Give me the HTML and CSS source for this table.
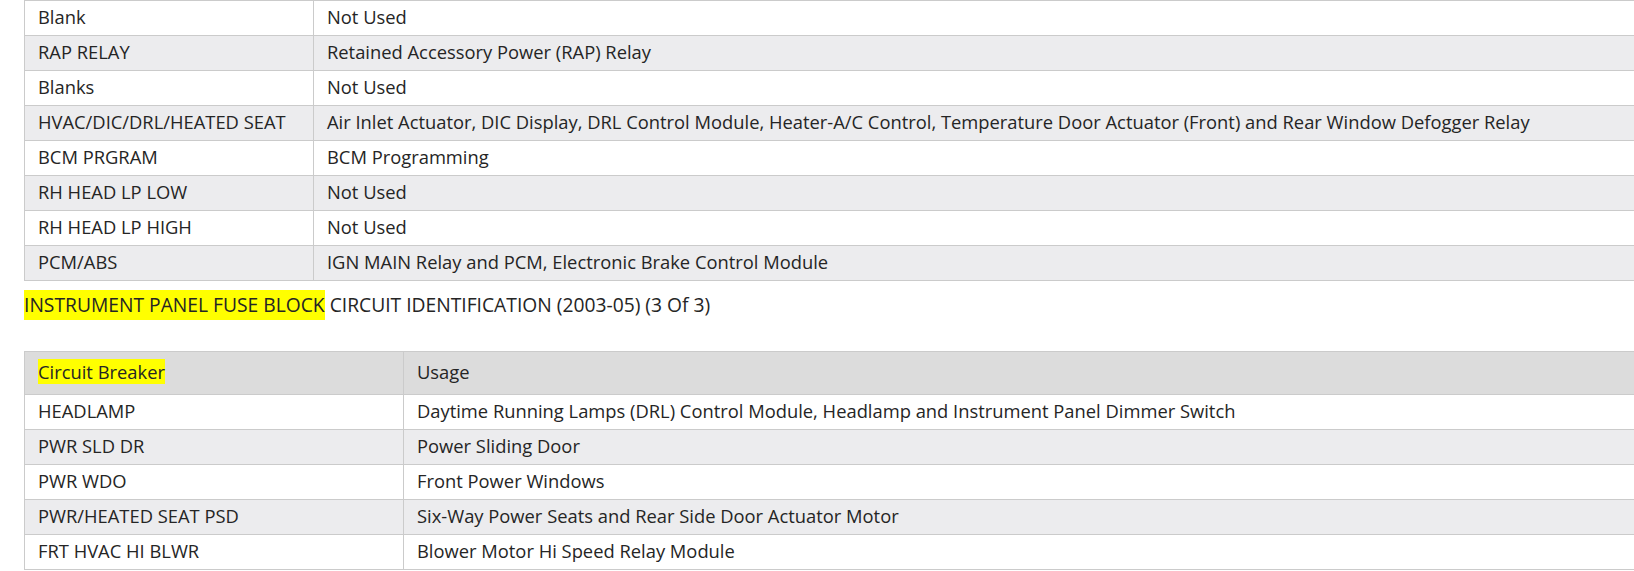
FILE: index.html
```html
<!DOCTYPE html>
<html>
<head>
<meta charset="utf-8">
<link rel="stylesheet" href="styles.css">
</head>
<body>
<div class="page">
  <table class="grid grid-a">
    <tbody>
      <tr><td class="c1">Blank</td><td>Not Used</td></tr>
      <tr><td class="c1">RAP RELAY</td><td>Retained Accessory Power (RAP) Relay</td></tr>
      <tr><td class="c1">Blanks</td><td>Not Used</td></tr>
      <tr><td class="c1">HVAC/DIC/DRL/HEATED SEAT</td><td>Air Inlet Actuator, DIC Display, DRL Control Module, Heater-A/C Control, Temperature Door Actuator (Front) and Rear Window Defogger Relay</td></tr>
      <tr><td class="c1">BCM PRGRAM</td><td>BCM Programming</td></tr>
      <tr><td class="c1">RH HEAD LP LOW</td><td>Not Used</td></tr>
      <tr><td class="c1">RH HEAD LP HIGH</td><td>Not Used</td></tr>
      <tr><td class="c1">PCM/ABS</td><td>IGN MAIN Relay and PCM, Electronic Brake Control Module</td></tr>
    </tbody>
  </table>
  <p class="caption"><span class="hl">INSTRUMENT PANEL FUSE BLOCK</span> CIRCUIT IDENTIFICATION (2003-05) (3 Of 3)</p>
  <table class="grid grid-b">
    <thead>
      <tr><th class="c1"><span class="hl">Circuit Breaker</span></th><th>Usage</th></tr>
    </thead>
    <tbody>
      <tr><td class="c1">HEADLAMP</td><td>Daytime Running Lamps (DRL) Control Module, Headlamp and Instrument Panel Dimmer Switch</td></tr>
      <tr><td class="c1">PWR SLD DR</td><td>Power Sliding Door</td></tr>
      <tr><td class="c1">PWR WDO</td><td>Front Power Windows</td></tr>
      <tr><td class="c1">PWR/HEATED SEAT PSD</td><td>Six-Way Power Seats and Rear Side Door Actuator Motor</td></tr>
      <tr><td class="c1">FRT HVAC HI BLWR</td><td>Blower Motor Hi Speed Relay Module</td></tr>
    </tbody>
  </table>
</div>
</body>
</html>
```

FILE: styles.css
```css
html, body {
  margin: 0;
  padding: 0;
  background: #ffffff;
  overflow: hidden;
}
body {
  font-family: "Open Sans", "Noto Sans", sans-serif;
  font-size: 18.35px;
  color: #252525;
}
.page {
  padding-left: 24px;
  width: 1640px;
}
.grid {
  border-collapse: collapse;
  width: 1640px;
  table-layout: fixed;
}
.grid td, .grid th {
  border: 1px solid #cbcbcb;
  padding: 0 13px;
  height: 34px;
  line-height: 32px;
  text-align: left;
  font-weight: normal;
  white-space: nowrap;
  vertical-align: top;
}
.grid tbody tr:nth-child(even) {
  background: #ececee;
}
.grid-a .c1 { width: 262px; }
.grid-b .c1 { width: 351px; }
.grid-b th {
  background: #dcdcdc;
  height: 42px;
  line-height: 40px;
  padding-left: 13px;
  padding-right: 14px;
}
.hl {
  background: #ffff00;
}
.caption {
  margin: 9px 0 31px 0;
  height: 30px;
  line-height: 30px;
  font-size: 19.25px;
}
.caption .hl {
  padding: 1px 0 2px 0;
}
```
